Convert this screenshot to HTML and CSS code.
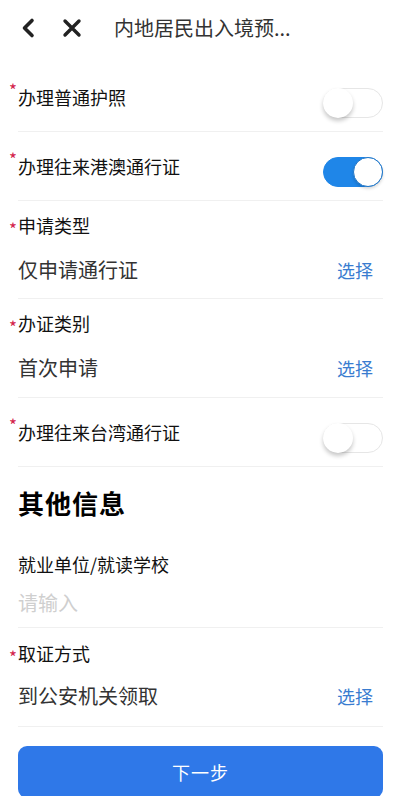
FILE: index.html
```html
<!DOCTYPE html>
<html lang="zh-CN">
<head>
<meta charset="utf-8">
<title>内地居民出入境预约</title>
<link rel="stylesheet" href="styles.css">
</head>
<body>
<div class="page">
  <header class="nav">
    <svg class="icon back" width="20" height="24" viewBox="0 0 20 24">
      <polyline points="13,4.5 5.5,12 13,19.5" fill="none" stroke="#222" stroke-width="3.6" stroke-linecap="round" stroke-linejoin="round"/>
    </svg>
    <svg class="icon close" width="22" height="22" viewBox="0 0 22 22">
      <path d="M4 4 L18 18 M18 4 L4 18" fill="none" stroke="#222" stroke-width="3.4" stroke-linecap="round"/>
    </svg>
    <div class="title">内地居民出入境预...</div>
  </header>

  <main class="form">
    <div class="row toggle-row">
      <span class="label req-top">办理普通护照</span>
      <span class="switch"><span class="knob"></span></span>
    </div>
    <div class="row toggle-row">
      <span class="label req-top">办理往来港澳通行证</span>
      <span class="switch on"><span class="knob"></span></span>
    </div>
    <div class="row select-row">
      <div class="label req-mid">申请类型</div>
      <div class="value-line">
        <span class="value">仅申请通行证</span>
        <span class="pick">选择</span>
      </div>
    </div>
    <div class="row select-row second">
      <div class="label req-mid">办证类别</div>
      <div class="value-line">
        <span class="value">首次申请</span>
        <span class="pick">选择</span>
      </div>
    </div>
    <div class="row toggle-row">
      <span class="label req-top">办理往来台湾通行证</span>
      <span class="switch"><span class="knob"></span></span>
    </div>

    <h2 class="section">其他信息</h2>

    <div class="row input-row">
      <div class="label">就业单位/就读学校</div>
      <div class="value placeholder">请输入</div>
    </div>
    <div class="row select-row last">
      <div class="label req-mid">取证方式</div>
      <div class="value-line">
        <span class="value">到公安机关领取</span>
        <span class="pick">选择</span>
      </div>
    </div>

    <button class="next" type="button">下一步</button>
  </main>
</div>
</body>
</html>
```
FILE: styles.css
```css
* { box-sizing: border-box; }
html, body { margin: 0; padding: 0; background: #fff; }
body {
  font-family: "Noto Sans CJK SC", "Noto Sans", sans-serif;
  color: #111;
  width: 400px;
  height: 796px;
  overflow: hidden;
}
.nav {
  height: 63px;
  display: flex;
  align-items: center;
  padding: 0 0 8px 19px;
}
.icon { display: block; flex: none; }
.back { margin-right: 22px; }
.close { margin-right: 31px; }
.title {
  font-size: 20px;
  color: #333;
  line-height: 28px;
}
.form { padding: 0 17px 0 18px; }
.row {
  border-bottom: 1px solid #f0f0f0;
}
.toggle-row {
  height: 69px;
  display: flex;
  align-items: center;
  justify-content: space-between;
}
.label {
  position: relative;
  font-size: 18px;
  line-height: 24px;
  color: #111;
}
.req-top::before,
.req-mid::before {
  content: "*";
  position: absolute;
  left: -9px;
  color: #d2224a;
  font-size: 17px;
  line-height: 17px;
}
.req-top::before { top: -4px; }
.req-mid::before { top: 7px; }
.switch {
  position: relative;
  width: 60px;
  height: 30px;
  border-radius: 15px;
  border: 1px solid #e6e6e6;
  background: #fff;
  flex: none;
  margin-top: 12px;
}
.switch .knob {
  position: absolute;
  top: -1px;
  left: -1px;
  width: 30px;
  height: 30px;
  border-radius: 50%;
  background: #fff;
  box-shadow: 0 3px 4px rgba(0,0,0,0.22);
}
.switch.on {
  background: #1f86e8;
  border-color: #1f86e8;
}
.switch.on .knob {
  left: 29px;
  border: 1.5px solid #1f76c8;
  box-shadow: 0 2px 3px rgba(0,0,0,0.15);
}
.select-row {
  padding: 12px 0 14px;
}
.select-row.second { padding-bottom: 15px; }
.value-line {
  margin-top: 19px;
  display: flex;
  justify-content: space-between;
  align-items: center;
  padding-right: 10px;
}
.value {
  font-size: 20px;
  line-height: 28px;
  color: #333;
}
.pick {
  font-size: 18px;
  line-height: 28px;
  color: #3a7cd0;
}
.section {
  margin: 18px 0 0;
  font-size: 26px;
  line-height: 36px;
  font-weight: 700;
  color: #000;
  letter-spacing: 1px;
}
.input-row {
  margin-top: 31px;
  padding: 0 0 10px;
}
.input-row .value { margin-top: 13px; }
.placeholder { color: #cfcfcf; }
.row.last { padding: 13px 0 16px; }
.row.last .value-line { margin-top: 17px; }
.next {
  display: block;
  width: 100%;
  height: 52px;
  margin-top: 19px;
  border: 0;
  border-radius: 9px;
  background: #2f78e8;
  color: #fff;
  font-family: inherit;
  font-size: 18px;
  letter-spacing: 1px;
}
```
